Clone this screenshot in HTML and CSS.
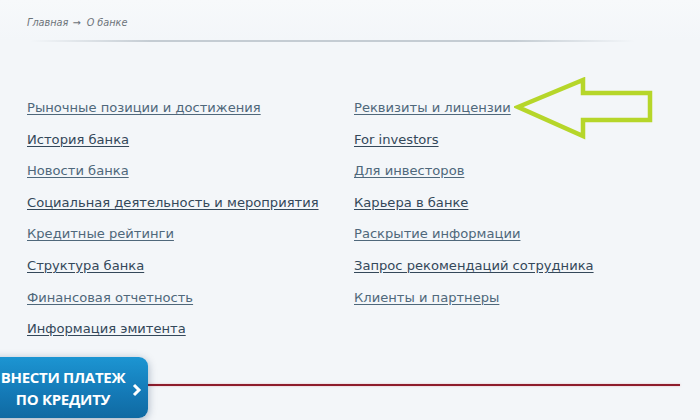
FILE: index.html
```html
<!DOCTYPE html>
<html lang="ru">
  <head>
    <meta charset="UTF-8" />
    <title>О банке</title>
    <link rel="stylesheet" href="styles.css">
  </head>
  <body>
    <div class="page">
      <div class="crumbs">
        <a href="#">Главная</a>
        <span class="sep">&rarr;</span>
        <span>О банке</span>
      </div>
      <div class="divider"></div>

      <!-- Разделы о банке -->
      <div class="links">
        <ul class="col">
          <li><a href="#" class="seen">Рыночные позиции и достижения</a></li>
          <li><a href="#">История банка</a></li>
          <li><a href="#" class="seen">Новости банка</a></li>
          <li><a href="#">Социальная деятельность и мероприятия</a></li>
          <li><a href="#" class="seen">Кредитные рейтинги</a></li>
          <li><a href="#">Структура банка</a></li>
          <li><a href="#" class="seen">Финансовая отчетность</a></li>
          <li><a href="#">Информация эмитента</a></li>
        </ul>
        <ul class="col">
          <li><a href="#" class="seen">Реквизиты и лицензии</a></li>
          <li><a href="#">For investors</a></li>
          <li><a href="#" class="seen">Для инвесторов</a></li>
          <li><a href="#">Карьера в банке</a></li>
          <li><a href="#" class="seen">Раскрытие информации</a></li>
          <li><a href="#">Запрос рекомендаций сотрудника</a></li>
          <li><a href="#" class="seen">Клиенты и партнеры</a></li>
        </ul>

        <svg class="pointer" width="140" height="64" viewBox="0 0 140 64">
          <path d="M4 30 L69 3 L69 16 L136 16 L136 43 L69 43 L69 59 Z"
                fill="none" stroke="#b6d62a" stroke-width="4.5" stroke-linejoin="miter" />
        </svg>
      </div>

      <div class="footer">
        <div class="footer-line"></div>
      </div>
    </div>

    <a href="#" class="pay-btn">
      <span class="pay-text">ВНЕСТИ ПЛАТЕЖ<br>ПО КРЕДИТУ</span>
      <svg class="pay-chev" width="10" height="14" viewBox="0 0 10 14">
        <path d="M2 2 L7 7 L2 12" fill="none" stroke="#fff" stroke-width="3" />
      </svg>
    </a>
  </body>
</html>
```

FILE: styles.css
```css
:root {
  --bg-color: #f3f6f9;
  --link-color: #34485a;
  --link-seen: #4f687b;
  --crumb-color: #6c7379;
}

* {
  margin: 0;
  padding: 0;
  box-sizing: border-box;
}

body {
  background: linear-gradient(#f7f9fb, var(--bg-color) 40px);
  font-family: "DejaVu Sans", Verdana, sans-serif;
  height: 420px;
  overflow: hidden;
  position: relative;
}

.page {
  padding: 16px 0 0 27px;
}

.crumbs {
  font-size: 9.7px;
  font-style: italic;
  color: var(--crumb-color);
  height: 14px;
  line-height: 14px;
}

.crumbs a {
  color: var(--crumb-color);
  text-decoration: none;
}

.crumbs .sep {
  font-style: normal;
  margin: 0 3px 0 1px;
}

.divider {
  height: 2px;
  margin: 10px 65px 0 3px;
  background: linear-gradient(90deg, rgba(190, 200, 208, 0), #c4ccd3 20%, #c4ccd3 80%, rgba(190, 200, 208, 0));
}

/* Список ссылок в две колонки */
.links {
  display: grid;
  grid-template-columns: 327px 1fr;
  margin-top: 58px;
  position: relative;
}

.col {
  list-style: none;
}

.col li {
  height: 31.6px;
  font-size: 13.1px;
  line-height: 15px;
}

.col a {
  color: var(--link-color);
  text-decoration: underline;
  text-underline-offset: 2px;
}

.col a.seen {
  color: var(--link-seen);
}

.pointer {
  position: absolute;
  left: 487px;
  top: -23px;
}

.footer {
  margin-top: 31px;
}

.footer-line {
  height: 2px;
  width: 653px;
  background: #8e1d2c;
  box-shadow: 0 0 2px rgba(220, 120, 130, 0.5);
}

/* Плавающая кнопка оплаты */
.pay-btn {
  position: absolute;
  left: -30px;
  top: 357px;
  width: 178px;
  height: 61px;
  border-radius: 9px;
  background: linear-gradient(#1c95d2, #1479b6 60%, #0f6aa2);
  box-shadow: 0 2px 8px rgba(0, 40, 80, 0.35);
  display: flex;
  align-items: center;
  text-decoration: none;
}

.pay-text {
  flex: 1;
  padding-left: 26px;
  text-align: center;
  color: #fff;
  font-family: "Open Sans", sans-serif;
  font-weight: 700;
  font-size: 15px;
  line-height: 22px;
  letter-spacing: -0.3px;
}

.pay-chev {
  margin: 4px 6px 0 2px;
}
```
